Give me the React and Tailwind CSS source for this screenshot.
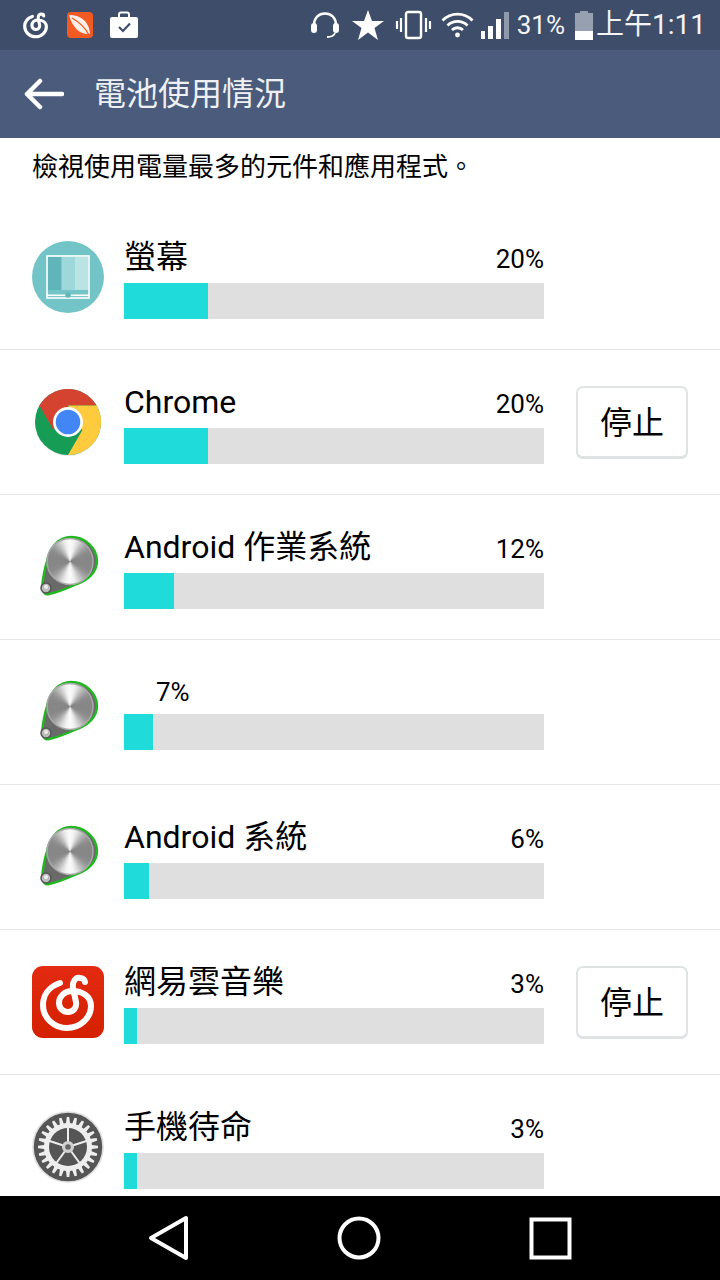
const cjk = { fontFamily: 'Roboto, "Noto Sans CJK TC", sans-serif' };

function NetEasePath({ stroke, width }) {
  return (
    <path
      d="M28 17C16 21 11 30 11 39C11 52 22 62 35 62C48 62 59 52 59 40C59 30 50 25 40 25C32 25 27 31 27 37C27 42 31 46 36 46C41 46 45 42 44 36L41 22C40 15 44 11 48 12C51 12 53 14 53 16"
      fill="none"
      stroke={stroke}
      strokeWidth={width}
      strokeLinecap="round"
      strokeLinejoin="round"
    />
  );
}

function ScreenIcon() {
  return (
    <svg width="72" height="72" viewBox="0 0 72 72">
      <circle cx="36" cy="36" r="36" fill="#72c4c6" />
      <rect x="16" y="16" width="13.500" height="33" fill="#5fb5b9" />
      <rect x="29.500" y="16" width="13.500" height="33" fill="#9ed8da" />
      <rect x="43" y="16" width="13" height="33" fill="#bbe3e4" />
      <rect x="15" y="15" width="42" height="42" fill="none" stroke="#fff" strokeWidth="1.600" />
      <rect x="15" y="53.500" width="42" height="1.600" fill="#fff" />
      <circle cx="36" cy="54" r="2.800" fill="#5fb9bc" />
    </svg>
  );
}

function ChromeIcon() {
  return (
    <svg width="72" height="72" viewBox="-3 -3 72 72">
      <circle cx="33" cy="34" r="33" fill="#ddd" opacity="0.6" />
      <circle cx="33" cy="33" r="33" fill="#169c55" />
      <path d="M4.400 16.500A33 33 0 0 1 61.600 16.500L33 16.500L18.700 41.250Z" fill="#d4432f" />
      <path d="M61.600 16.500A33 33 0 0 1 33 66L47.300 41.250L33 16.500Z" fill="#fdcb3d" />
      <circle cx="33" cy="33" r="15" fill="#fff" />
      <circle cx="33" cy="33" r="12.300" fill="#4285f4" />
    </svg>
  );
}

const wedges = Array.from({ length: 72 }, (_, i) => {
  const a0 = (i / 72) * Math.PI * 2;
  const a1 = ((i + 2) / 72) * Math.PI * 2;
  const mid = (a0 + a1) / 2;
  const c = Math.pow(Math.abs(Math.cos(mid - 0.05)), 4);
  const s = Math.round(135 + 115 * c);
  return {
    d: `M38 30.500L${38 + 23 * Math.sin(a0)} ${30.5 - 23 * Math.cos(a0)}L${38 + 23 * Math.sin(a1)} ${30.5 - 23 * Math.cos(a1)}Z`,
    fill: `rgb(${s},${s},${s})`,
  };
});

function KnobIcon() {
  return (
    <svg width="72" height="72" viewBox="0 0 72 72">
      <path d="M11 60C9 56 12 40 15 30C18 15 28 6 39 6C53 6 65 17 65 30C65 41 56 49 45 53C36 57 24 62 17 63C14 64 12 62 11 60Z" fill="#6a6a6a" stroke="#1fb81f" strokeWidth="2.400" />
      <g>
        {wedges.map((w, i) => (
          <path key={i} d={w.d} fill={w.fill} />
        ))}
      </g>
      <circle cx="38" cy="30.500" r="23" fill="none" stroke="#a8a8a8" strokeWidth="1.500" />
      <circle cx="14" cy="57" r="5" fill="#bbb" stroke="#555" strokeWidth="1.500" />
      <circle cx="14" cy="56" r="2" fill="#eee" />
    </svg>
  );
}

function NetEaseIcon() {
  return (
    <svg width="72" height="72" viewBox="0 0 72 72">
      <defs>
        <linearGradient id="ne" x1="0" y1="0" x2="0" y2="1">
          <stop offset="0" stopColor="#e32a12" />
          <stop offset="1" stopColor="#d32100" />
        </linearGradient>
      </defs>
      <rect width="72" height="72" rx="11" fill="url(#ne)" />
      <NetEasePath stroke="#fff" width="6" />
    </svg>
  );
}

const teeth = (() => {
  const pts = [];
  const n = 24;
  for (let i = 0; i < n; i++) {
    const a = (i / n) * Math.PI * 2;
    const st = (Math.PI * 2) / n;
    [[-0.32, 24], [-0.16, 30], [0.16, 30], [0.32, 24]].forEach(([o, r]) => {
      pts.push(`${36 + r * Math.cos(a + o * st)},${36 + r * Math.sin(a + o * st)}`);
    });
  }
  return pts.join(' ');
})();

function GearIcon() {
  return (
    <svg width="72" height="72" viewBox="0 0 72 72">
      <circle cx="36" cy="36" r="35" fill="#555" stroke="#ddd" strokeWidth="1.600" />
      <polygon points={teeth} fill="#eee" />
      <circle cx="36" cy="36" r="19" fill="#555" />
      {[-90, -18, 54, 126, 198].map((a) => (
        <line key={a} x1="36" y1="36" x2={36 + 21 * Math.cos((a * Math.PI) / 180)} y2={36 + 21 * Math.sin((a * Math.PI) / 180)} stroke="#eee" strokeWidth="2" />
      ))}
      <circle cx="36" cy="36" r="6" fill="#d0d0d0" />
      <circle cx="36" cy="36" r="2.800" fill="#666" />
    </svg>
  );
}

function StatusIcons() {
  return (
    <div className="flex items-center pl-[22px] gap-[17px]">
      <svg width="28" height="30" viewBox="5 5 62 62"><NetEasePath stroke="#fff" width="7" /></svg>
      <svg width="26" height="26" viewBox="0 0 26 26">
        <rect width="26" height="26" rx="4" fill="#f15a22" />
        <path d="M2 3C12 3 22 8 23 22C15 23 6 18 2 3Z" fill="#fff" opacity="0.9" />
        <path d="M5 6C12 10 18 15 22 23" stroke="#f15a22" strokeWidth="1.300" fill="none" />
      </svg>
      <svg width="28" height="28" viewBox="0 0 28 28">
        <path d="M9 7V3.500C9 2.500 10 1.500 11 1.500H17C18 1.500 19 2.500 19 3.500V7" fill="none" stroke="#fff" strokeWidth="2" />
        <rect y="6" width="28" height="21" rx="2" fill="#fff" />
        <path d="M9 16L13 20L20 12.500" fill="none" stroke="#3e4e6a" strokeWidth="2.200" />
      </svg>
    </div>
  );
}

function StatusRight() {
  return (
    <div className="flex items-center pr-[14px]">
      <svg width="30" height="28" viewBox="0 0 30 28" className="mr-[12px]">
        <path d="M4 17V14C4 7 8.500 2.500 15 2.500C21.500 2.500 26 7 26 14V17" fill="none" stroke="#fff" strokeWidth="2.400" />
        <rect x="1" y="12" width="6" height="10" rx="3" fill="#fff" />
        <rect x="23" y="12" width="6" height="10" rx="3" fill="#fff" />
        <path d="M25 22C24 25 21 26 17 26" fill="none" stroke="#fff" strokeWidth="1.800" />
      </svg>
      <svg width="32" height="30" viewBox="0 0 32 30" className="mr-[11px]">
        <path d="M16 0L20 11H32L22.500 18L26 30L16 22.500L6 30L9.500 18L0 11H12Z" fill="#fff" />
      </svg>
      <svg width="37" height="30" viewBox="0 0 37 30" className="mr-[9px]">
        <rect x="11" y="2" width="15" height="26" rx="2" fill="none" stroke="#fff" strokeWidth="2.400" />
        <path d="M6 8V22M2 11V19M31 8V22M35 11V19" stroke="#fff" strokeWidth="2.200" />
      </svg>
      <svg width="33" height="26" viewBox="0 0 33 26" className="mr-[7px]">
        <path d="M1.500 8.500C10 0 23 0 31.500 8.500M6.500 13.500C12 8 21 8 26.500 13.500M11 18C14 15 19 15 22 18" fill="none" stroke="#fff" strokeWidth="2.800" />
        <circle cx="16.500" cy="23" r="2.400" fill="#fff" />
      </svg>
      <svg width="28" height="28" viewBox="0 0 28 28" className="mr-[8px]">
        <rect x="0" y="20" width="4" height="8" fill="#fff" />
        <rect x="7" y="15" width="5" height="13" fill="#fff" />
        <rect x="15" y="8" width="5" height="20" fill="#fff" />
        <rect x="23" y="1" width="5" height="27" fill="#8f99ab" />
      </svg>
      <span className="text-[26px] leading-none text-[#f3f4f6] mr-[10px]" style={cjk}>31%</span>
      <svg width="18" height="30" viewBox="0 0 18 30" className="mr-[3px]">
        <path d="M5 1H13V3H18V30H0V3H5Z" fill="#97a0b1" />
        <rect y="21" width="18" height="9" fill="#fff" />
      </svg>
      <span className="text-[28px] leading-none text-[#f3f4f6]" style={cjk}>上午1:11</span>
    </div>
  );
}

function StopButton() {
  return (
    <button className="w-[112px] h-[73px] rounded-[7px] border-2 border-b-[3px] border-[#dfe3e3] bg-white pt-[3px] text-[32px] leading-none text-black" style={cjk}>
      停止
    </button>
  );
}

const rows = [
  { Icon: ScreenIcon, name: '螢幕', pct: '20%', w: 84 },
  { Icon: ChromeIcon, name: 'Chrome', pct: '20%', w: 84, stop: true },
  { Icon: KnobIcon, name: 'Android 作業系統', pct: '12%', w: 50 },
  { Icon: KnobIcon, name: '', pct: '7%', w: 29 },
  { Icon: KnobIcon, name: 'Android 系統', pct: '6%', w: 25 },
  { Icon: NetEaseIcon, name: '網易雲音樂', pct: '3%', w: 13, stop: true },
  { Icon: GearIcon, name: '手機待命', pct: '3%', w: 13 },
];

function Row({ Icon, name, pct, w, stop }) {
  return (
    <div className="h-[145px] shrink-0 flex items-center border-b border-[#e6e6e6] pl-[32px]">
      <div className="w-[92px] shrink-0 flex"><Icon /></div>
      <div className="w-[420px] shrink-0 flex flex-col">
        {name ? (
          <div className="flex justify-between items-end h-[44px] mb-[4px]">
            <span className="text-[32px] leading-[42px] mb-[1px] text-black" style={cjk}>{name}</span>
            <span className="text-[26px] leading-[32px] mb-[4px] text-black" style={cjk}>{pct}</span>
          </div>
        ) : (
          <div className="flex items-end h-[34px] mb-[6px] pl-[32px]">
            <span className="text-[26px] leading-[32px] text-black" style={cjk}>{pct}</span>
          </div>
        )}
        <div className="h-[36px] bg-[#dfdfdf]">
          <div className="h-full bg-[#1fdcdb]" style={{ width: w }} />
        </div>
      </div>
      {stop && <div className="ml-[32px]"><StopButton /></div>}
    </div>
  );
}

export default function App() {
  return (
    <div className="w-[720px] h-[1280px] flex flex-col bg-white overflow-hidden" style={cjk}>
      <div className="h-[50px] shrink-0 bg-[#3e4e6a] flex items-center justify-between">
        <StatusIcons />
        <StatusRight />
      </div>
      <div className="h-[88px] shrink-0 bg-[#4a5b7b] flex items-center pl-[24px]">
        <svg width="40" height="32" viewBox="0 0 40 32" className="mr-[30px]">
          <path d="M38 16H3M16 3L3 16L16 29" fill="none" stroke="#fff" strokeWidth="4.500" strokeLinecap="round" strokeLinejoin="round" />
        </svg>
        <span className="text-[32px] leading-none text-[#eef0f4]">電池使用情況</span>
      </div>
      <div className="flex-1 min-h-0 overflow-hidden">
        <div className="h-[67px] pl-[32px] pt-[10px] text-[26px] leading-[38px] text-black">檢視使用電量最多的元件和應用程式。</div>
        {rows.map((r, i) => <Row key={i} {...r} />)}
      </div>
      <div className="h-[84px] shrink-0 bg-black flex items-center justify-center gap-[147px]">
        <svg width="42" height="46" viewBox="0 0 42 46">
          <path d="M38 3V43L3 23Z" fill="none" stroke="#fff" strokeWidth="4" strokeLinejoin="round" />
        </svg>
        <svg width="44" height="44" viewBox="0 0 44 44">
          <circle cx="22" cy="22" r="19.500" fill="none" stroke="#fff" strokeWidth="4" />
        </svg>
        <svg width="44" height="44" viewBox="0 0 44 44">
          <rect x="3.500" y="3.500" width="38" height="38" fill="none" stroke="#fff" strokeWidth="4" />
        </svg>
      </div>
    </div>
  );
}
